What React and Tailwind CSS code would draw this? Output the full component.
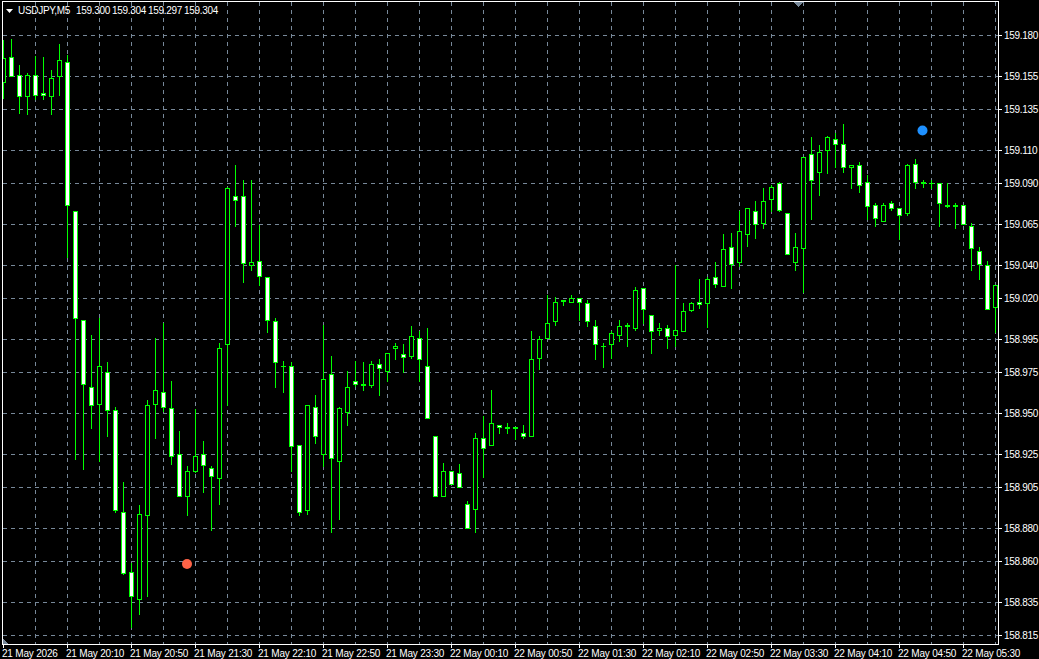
const candles = [
  [40, 99, 58, 83, 0], [39, 77, 57, 77, 1], [65, 114, 75, 97, 1], [73, 115, 75, 97, 0], [56, 100, 75, 96, 1],
  [57, 100, 93, 96, 1], [70, 115, 78, 97, 0], [44, 96, 60, 77, 0], [55, 258, 62, 206, 1], [211, 460, 211, 319, 1],
  [320, 470, 320, 385, 1], [335, 429, 387, 406, 1], [318, 462, 366, 405, 0], [362, 437, 372, 411, 1], [407, 513, 410, 511, 1],
  [482, 575, 512, 574, 1], [563, 628, 572, 597, 1], [505, 615, 514, 600, 0], [400, 597, 405, 516, 0], [338, 439, 390, 405, 0],
  [323, 412, 392, 408, 1], [381, 465, 408, 457, 1], [431, 497, 454, 497, 1], [466, 516, 471, 497, 0], [409, 473, 456, 472, 0],
  [441, 493, 454, 466, 1], [466, 531, 468, 477, 1], [343, 505, 348, 479, 0], [187, 406, 188, 345, 0], [165, 227, 196, 201, 1],
  [180, 283, 196, 264, 1], [180, 271, 262, 266, 0], [225, 286, 261, 277, 1], [277, 333, 277, 321, 1], [318, 388, 321, 363, 1],
  [361, 393, 366, 367, 1], [362, 472, 366, 447, 1], [445, 516, 445, 513, 1], [405, 515, 405, 511, 0], [395, 444, 407, 437, 1],
  [325, 467, 379, 455, 0], [356, 533, 374, 459, 1], [407, 520, 408, 462, 0], [371, 426, 387, 413, 0], [361, 387, 381, 385, 1],
  [362, 391, 384, 386, 1], [361, 388, 364, 386, 0], [359, 396, 364, 369, 1], [353, 382, 353, 372, 0], [343, 360, 346, 349, 0],
  [344, 373, 354, 358, 1], [326, 359, 336, 357, 0], [331, 382, 338, 360, 1], [328, 419, 366, 419, 1], [436, 497, 436, 497, 1],
  [463, 497, 471, 497, 0], [471, 485, 471, 485, 1], [464, 488, 473, 488, 1], [501, 529, 504, 529, 1], [433, 533, 438, 510, 0],
  [416, 478, 438, 449, 1], [390, 446, 423, 446, 0], [425, 434, 425, 428, 1], [423, 434, 427, 429, 1], [427, 440, 427, 429, 1],
  [425, 439, 433, 437, 1], [331, 437, 359, 437, 0], [336, 370, 339, 359, 0], [295, 339, 323, 339, 0], [297, 326, 302, 322, 0],
  [300, 306, 300, 302, 1], [295, 303, 298, 303, 0], [298, 321, 298, 303, 1], [300, 327, 303, 322, 1], [320, 360, 326, 345, 1],
  [343, 368, 346, 347, 1], [331, 359, 333, 345, 0], [320, 342, 326, 336, 0], [323, 347, 325, 327, 1], [287, 331, 290, 329, 0],
  [288, 324, 288, 310, 1], [315, 354, 315, 332, 1], [323, 336, 328, 331, 0], [325, 349, 328, 337, 1], [265, 347, 330, 336, 0],
  [303, 332, 311, 332, 0], [302, 312, 303, 311, 0], [279, 309, 302, 305, 1], [277, 328, 279, 304, 0], [262, 288, 277, 285, 1],
  [234, 287, 249, 287, 0], [233, 289, 247, 265, 1], [211, 267, 231, 263, 0], [208, 247, 208, 235, 0], [201, 239, 211, 225, 1],
  [188, 229, 201, 224, 0], [185, 212, 187, 200, 0], [182, 212, 183, 211, 1], [213, 255, 213, 255, 1], [233, 271, 247, 263, 0],
  [157, 293, 157, 249, 0], [137, 220, 154, 181, 1], [145, 196, 152, 173, 0], [136, 174, 137, 151, 0], [133, 168, 139, 145, 1],
  [124, 173, 144, 168, 1], [165, 189, 165, 168, 0], [162, 193, 165, 186, 1], [175, 220, 182, 207, 1], [203, 227, 205, 219, 1],
  [203, 222, 205, 222, 0], [201, 211, 203, 209, 1], [208, 240, 208, 216, 1], [164, 216, 165, 214, 0], [159, 189, 164, 183, 1],
  [180, 188, 182, 184, 1], [180, 189, 183, 184, 1], [183, 227, 183, 204, 1], [183, 208, 205, 207, 1], [203, 229, 205, 207, 1],
  [205, 225, 205, 225, 1], [223, 271, 226, 249, 1], [247, 280, 251, 265, 1], [261, 310, 265, 310, 1], [285, 333, 285, 308, 0],
];

const prices = [
  ["159.180", 35], ["159.155", 76], ["159.135", 109], ["159.110", 150], ["159.090", 183], ["159.065", 224],
  ["159.040", 265], ["159.020", 298], ["158.995", 339], ["158.975", 372], ["158.950", 413], ["158.925", 454],
  ["158.905", 487], ["158.880", 528], ["158.860", 561], ["158.835", 602], ["158.815", 635],
];

const times = [
  "21 May 2026", "21 May 20:10", "21 May 20:50", "21 May 21:30", "21 May 22:10", "21 May 22:50", "21 May 23:30", "22 May 00:10",
  "22 May 00:50", "22 May 01:30", "22 May 02:10", "22 May 02:50", "22 May 03:30", "22 May 04:10", "22 May 04:50", "22 May 05:30",
];

const verticals = Array.from({ length: 31 }, (_, i) => 35 + i * 32);

function Candle({ data, index }) {
  const [wickTop, wickBottom, top, bottom, filled] = data;
  const x = 3 + index * 8;
  const height = Math.max(bottom - top, 1);
  return (
    <g>
      <rect x={x} y={wickTop} width="1" height={wickBottom - wickTop} fill="#00ff00" />
      <rect x={x - 2} y={top} width="5" height={height} fill="#00ff00" />
      {height > 2 && (
        <rect x={x - 1} y={top + 1} width="3" height={height - 2} fill={filled ? "#ffffff" : "#000000"} />
      )}
    </g>
  );
}

export default function App() {
  return (
    <div className="w-[1039px] h-[659px] overflow-hidden bg-black pt-px text-white font-['Liberation_Sans',sans-serif]">
      <div className="flex h-[644px] pl-[2px]">
        {/* chart */}
        <div className="relative w-[997px] border border-white">
          <svg width="995" height="642" viewBox="3 2 995 642" shapeRendering="crispEdges" className="block">
            {prices.map(([label, y]) => (
              <line key={label} x1="3" x2="998" y1={y + 0.5} y2={y + 0.5} stroke="#778899" strokeDasharray="4 4" />
            ))}
            {verticals.map((x) => (
              <line key={x} x1={x + 0.5} x2={x + 0.5} y1="2" y2="644" stroke="#778899" strokeDasharray="4 4" />
            ))}
            {candles.map((c, i) => (
              <Candle key={i} data={c} index={i} />
            ))}
            <polygon points="793,2 803,2 798,7" fill="#778899" />
            <polygon points="3,639 3,644 9,644" fill="#778899" />
            <circle cx="187" cy="564" r="5" fill="#ff6347" shapeRendering="auto" />
            <circle cx="922.5" cy="130.5" r="5" fill="#1e90ff" shapeRendering="auto" />
          </svg>
          <div className="absolute left-[3px] top-[3px] flex items-center h-[12px] text-[10px] leading-[12px] tracking-[-0.3px] whitespace-nowrap">
            <svg width="7" height="4" viewBox="0 0 7 4" className="mr-[5px]">
              <polygon points="0,0 7,0 3.5,4" fill="#ffffff" />
            </svg>
            <span className="w-[58px]">USDJPY,M5</span>
            <span className="w-[36px]">159.300</span>
            <span className="w-[36px]">159.304</span>
            <span className="w-[36px]">159.297</span>
            <span className="w-[36px]">159.304</span>
          </div>
        </div>
        {/* price axis */}
        <div className="relative w-[40px]">
          {prices.map(([label, y]) => (
            <div key={label} className="absolute left-0 flex items-center h-[12px]" style={{ top: y - 6 }}>
              <div className="w-[3px] h-px bg-white mr-[2px] -mt-px" />
              <span className="text-[10px] leading-[12px] tracking-[-0.3px]">{label}</span>
            </div>
          ))}
        </div>
      </div>
      {/* time axis */}
      <div className="flex pl-[2px]">
        {times.map((t) => (
          <div key={t} className="w-[64px] shrink-0">
            <div className="ml-px w-px h-[3px] bg-white" />
            <div className="text-[10px] leading-[12px] tracking-[-0.2px] whitespace-nowrap">{t}</div>
          </div>
        ))}
      </div>
    </div>
  );
}
